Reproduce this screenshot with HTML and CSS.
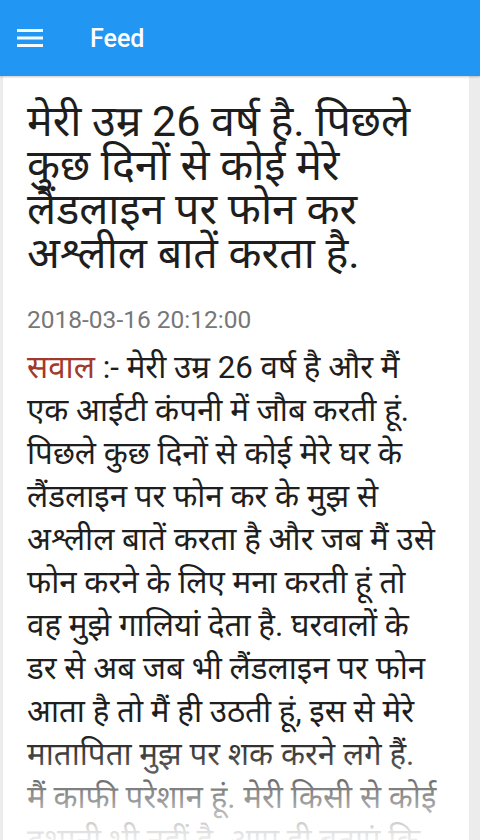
FILE: index.html
```html
<!DOCTYPE html>
<html lang="hi">
<head>
<meta charset="utf-8">
<title>Feed</title>
<link rel="stylesheet" href="styles.css">
</head>
<body>
<header class="appbar">
  <svg class="menu" width="26" height="18" viewBox="0 0 26 18"><rect x="0" y="0" width="26" height="3" fill="#f4fbff"/><rect x="0" y="7.5" width="26" height="3" fill="#f4fbff"/><rect x="0" y="15" width="26" height="3" fill="#f4fbff"/></svg>
  <span class="title">Feed</span>
</header>
<main class="page">
  <article class="card">
    <h1 class="headline">मेरी उम्र 26 वर्ष है. पिछले कुछ दिनों से कोई मेरे लैंडलाइन पर फोन कर अश्लील बातें करता है.</h1>
    <div class="date">2018-03-16 20:12:00</div>
    <p class="body"><span class="q">सवाल</span> :- मेरी उम्र 26 वर्ष है और मैं एक आईटी कंपनी में जौब करती हूं. पिछले कुछ दिनों से कोई मेरे घर के लैंडलाइन पर फोन कर के मुझ से अश्लील बातें करता है और जब मैं उसे फोन करने के लिए मना करती हूं तो वह मुझे गालियां देता है. घरवालों के डर&nbsp;से अब जब भी लैंडलाइन पर फोन आता है तो मैं ही उठती हूं, इस से मेरे मातापिता मुझ पर शक करने लगे हैं. मैं&nbsp;काफी परेशान हूं. मेरी किसी से कोई दुश्मनी भी नहीं है. आप ही बताएं कि मैं क्या करूं?</p>
    <div class="fade"></div>
  </article>
</main>
</body>
</html>
```
FILE: styles.css
```css
html, body {
  margin: 0;
  padding: 0;
  height: 840px;
  overflow: hidden;
  background: #ececec;
  font-family: Roboto, "Noto Sans Devanagari", "Noto Sans", sans-serif;
}
.appbar {
  height: 76px;
  background: #2196f3;
  display: flex;
  align-items: center;
  box-shadow: 0 1px 2px rgba(0,0,0,0.22);
  position: relative;
  z-index: 2;
}
.menu {
  margin-left: 17px;
  margin-right: 47px;
}
.title {
  color: #fff;
  font-size: 25px;
  font-weight: 500;
  margin-top: 1px;
}
.page {
  padding: 0 11px 0 3px;
}
.card {
  background: #fff;
  padding: 23px 25px 0 24px;
  height: 741px;
  overflow: hidden;
  position: relative;
}
.headline {
  margin: 0;
  font-size: 43px;
  font-weight: 400;
  line-height: 44px;
  color: #1e1e1e;
}
.date {
  margin-top: 30px;
  font-size: 24.5px;
  color: #777;
  line-height: 30px;
}
.body {
  margin: 11px 0 0 0;
  font-size: 31.3px;
  line-height: 43px;
  color: #1e1e1e;
}
.q {
  color: #a3392c;
}
.fade {
  position: absolute;
  left: 0;
  right: 0;
  bottom: 0;
  height: 105px;
  background: linear-gradient(to bottom, rgba(255,255,255,0) 0%, rgba(255,255,255,0.42) 50%, rgba(255,255,255,0.85) 90%, rgba(255,255,255,0.92) 100%);
}
```
